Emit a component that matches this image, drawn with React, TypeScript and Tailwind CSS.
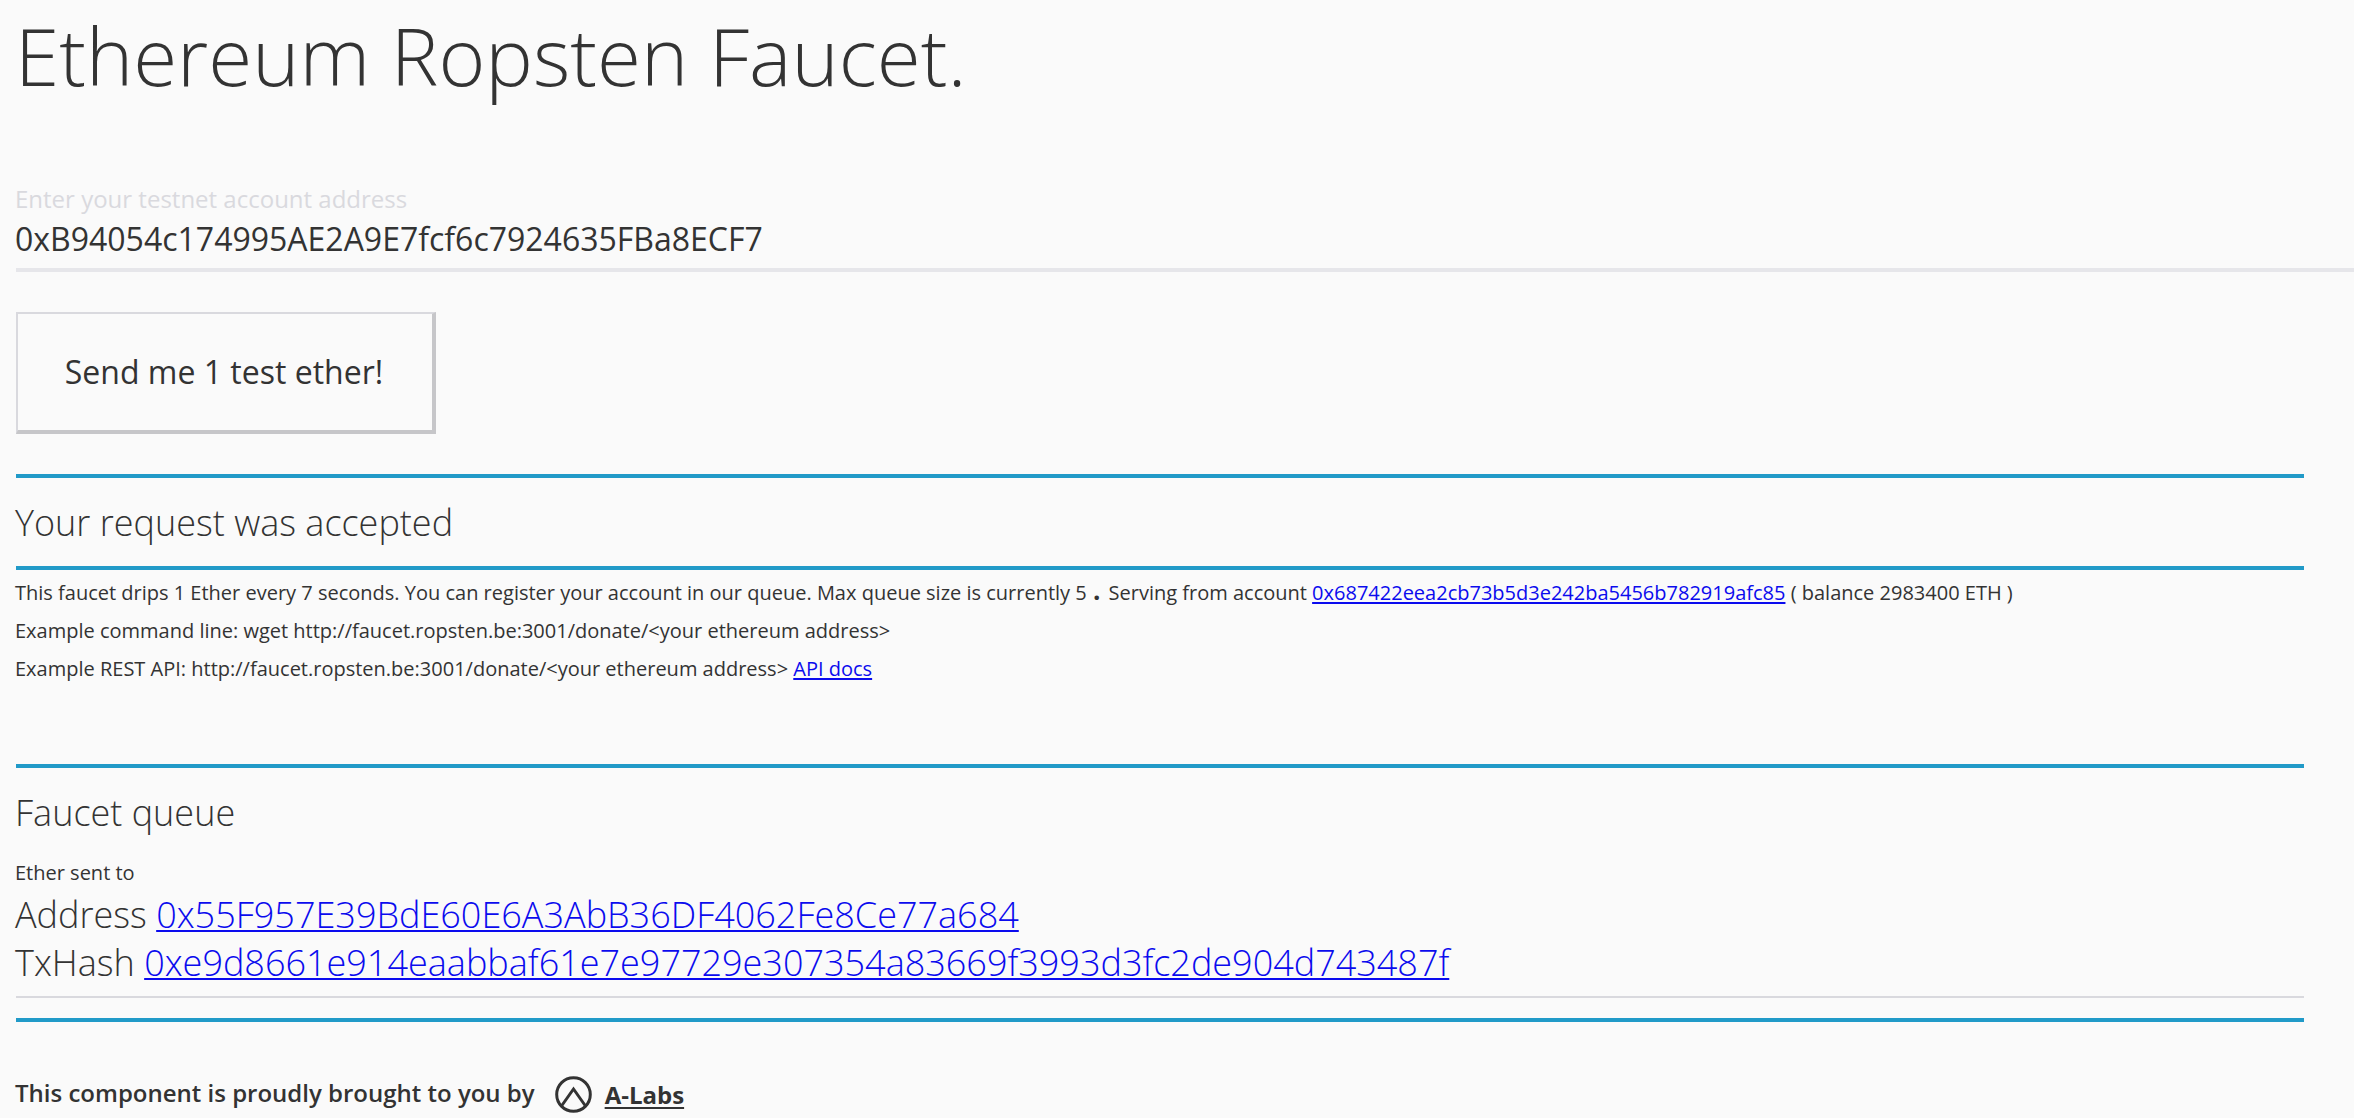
import React from "react";

const link = "text-[#0b0bee] underline decoration-2 underline-offset-2";

function Rule() {
  return <div className="ml-px h-1 w-[2288px] shrink-0 bg-[#219ac8]" />;
}

export default function App() {
  return (
    <div className="flex h-[1118px] flex-col overflow-hidden bg-[#fafafa] pl-[15px] font-['Open_Sans',sans-serif] text-[#333333] whitespace-nowrap">
      <h1 className="h-[183px] shrink-0 text-[80px] leading-[110px] font-light">Ethereum Ropsten Faucet.</h1>
      <label className="h-[32px] shrink-0 text-[24px] leading-[32px] text-[#d9d9de]">Enter your testnet account address</label>
      <div className="ml-px h-[57px] shrink-0 border-b-4 border-[#e6e6ea]">
        <p className="-ml-px text-[32px] leading-[48px]">0xB94054c174995AE2A9E7fcf6c7924635FBa8ECF7</p>
      </div>
      <button className="mt-[40px] ml-px h-[122px] w-[420px] shrink-0 border-2 border-r-4 border-b-4 border-[#c6c6c9] border-t-[#d9d9de] border-l-[#d9d9de] pr-[2px] text-[32px]">Send me 1 test ether!</button>
      <div className="h-[40px] shrink-0" />
      <Rule />
      <h2 className="h-[88px] shrink-0 text-[36px] leading-[90px] font-light">Your request was accepted</h2>
      <Rule />
      <div className="h-[194px] shrink-0 pt-[4px] text-[20px] leading-[38px]">
        <p>This faucet drips 1 Ether every 7 seconds. You can register your account in our queue. Max queue size is currently 5 <b className="mr-[3px] ml-px text-[26px] leading-none">.</b> Serving from account <a className={link}>0x687422eea2cb73b5d3e242ba5456b782919afc85</a> ( balance 2983400 ETH )</p>
        <p>Example command line: wget http://faucet.ropsten.be:3001/donate/&lt;your ethereum address&gt;</p>
        <p>Example REST API: http://faucet.ropsten.be:3001/donate/&lt;your ethereum address&gt; <a className={link}>API docs</a></p>
      </div>
      <Rule />
      <h2 className="h-[88px] shrink-0 text-[36px] leading-[90px] font-light">Faucet queue</h2>
      <p className="h-[32px] shrink-0 text-[20px] leading-[34px]">Ether sent to</p>
      <div className="h-[108px] shrink-0 pt-[3px] text-[36px] leading-[48px] font-light">
        <p>Address <a className={link}>0x55F957E39BdE60E6A3AbB36DF4062Fe8Ce77a684</a></p>
        <p>TxHash <a className={link}>0xe9d8661e914eaabbaf61e7e97729e307354a83669f3993d3fc2de904d743487f</a></p>
      </div>
      <div className="mb-[20px] ml-px h-[2px] w-[2288px] shrink-0 bg-[#d9d9de]" />
      <Rule />
      <footer className="mt-[52px] flex h-[40px] shrink-0 items-center text-[24px] font-semibold">
        <span className="mb-[2px]">This component is proudly brought to you by</span>
        <svg className="ml-[20px] size-[37px]" viewBox="0 0 37 37" fill="none" stroke="currentColor" strokeWidth="3"><circle cx="18.5" cy="18.5" r="16.8" /><path d="M6.5 30 18.5 13l12 17" /></svg>
        <a className="mt-px ml-[13px] font-bold underline decoration-2 underline-offset-3">A-Labs</a>
      </footer>
    </div>
  );
}
